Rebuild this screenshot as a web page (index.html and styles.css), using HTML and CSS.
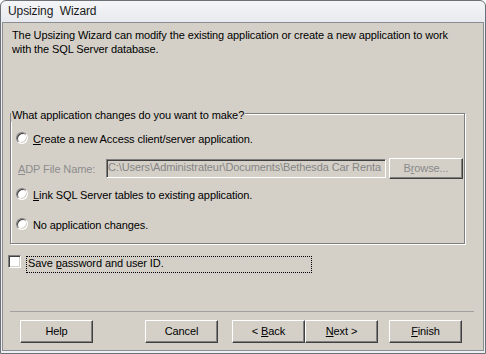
FILE: index.html
```html
<!DOCTYPE html>
<html lang="en">
<head>
  <meta charset="UTF-8" />
  <title>Upsizing Wizard</title>
  <link rel="stylesheet" href="styles.css">
</head>
<body>
  <div class="window">
    <div class="titlebar">Upsizing  Wizard</div>

    <div class="client">
      <p class="intro">The Upsizing Wizard can modify the existing application or create a new application to work<br>with the SQL Server database.</p>

      <fieldset class="group">
        <legend>What application changes do you want to make?</legend>

        <label class="option">
          <span class="radio"></span>
          <span class="option-text"><u>C</u>reate a new Access client/server application.</span>
        </label>

        <div class="file-row">
          <span class="file-label"><u>A</u>DP File Name:</span>
          <div class="textbox">C:\Users\Administrateur\Documents\Bethesda Car Renta</div>
          <button class="btn browse" disabled>B<u>r</u>owse...</button>
        </div>

        <label class="option option-link">
          <span class="radio"></span>
          <span class="option-text"><u>L</u>ink SQL Server tables to existing application.</span>
        </label>

        <label class="option option-none">
          <span class="radio"></span>
          <span class="option-text">No application chan<u>g</u>es.</span>
        </label>
      </fieldset>

      <div class="check-row">
        <span class="checkbox"></span>
        <span class="check-text">Save <u>p</u>assword and user ID.</span>
      </div>

      <div class="separator"></div>

      <!-- Wizard navigation -->
      <div class="buttons">
        <button class="btn">Help</button>
        <button class="btn cancel">Cancel</button>
        <button class="btn back">&lt; <u>B</u>ack</button>
        <button class="btn"><u>N</u>ext &gt;</button>
        <button class="btn finish"><u>F</u>inish</button>
      </div>
    </div>
  </div>
</body>
</html>
```

FILE: styles.css
```css
* {
  box-sizing: border-box;
}
body {
  margin: 0;
  background: #fff;
  font-family: "Liberation Sans", Arial, sans-serif;
  font-size: 11px;
  letter-spacing: -0.1px;
  color: #000;
}
.window {
  width: 486px;
  height: 354px;
  border: 1px solid #6c7178;
  border-radius: 6px 6px 0 0;
  background: linear-gradient(#f4f5f7, #e7eaee 21px, #eceef1 21px);
  display: flex;
  flex-direction: column;
}
.titlebar {
  height: 21px;
  line-height: 21px;
  padding-left: 7px;
  font-size: 12px;
  color: #1a1a1a;
  white-space: pre;
}
.client {
  flex: 1;
  margin: 0 1px 2px;
  border: 1px solid #8a8d92;
  background: #d4d0c8;
  display: flex;
  flex-direction: column;
}
.intro {
  margin: 0;
  padding: 5px 0 0 9px;
  line-height: 14px;
}

/* Group box */
.group {
  margin: 49px 0 0 7px;
  width: 455px;
  min-width: 0;
  padding: 6px 0 9px;
  border: 1px solid #808080;
  box-shadow: 1px 1px 0 #fff, inset 1px 1px 0 #fff;
}
.group legend {
  padding: 4px 1px 0;
  line-height: 13px;
  background: #d4d0c8;
}
.option {
  display: flex;
  align-items: center;
  height: 20px;
  padding-left: 5px;
  gap: 5px;
}
.option-text {
  padding-top: 2px;
  line-height: 13px;
}
.option-link {
  margin-top: 5px;
}
.option-none {
  margin-top: 10px;
}
.radio {
  width: 12px;
  height: 12px;
  border-radius: 50%;
  background: #fff;
  border: 1px solid;
  border-color: #808080 #fff #fff #808080;
  box-shadow: inset 1px 1px 0 #404040, inset -1px -1px 0 #d4d0c8;
}
.file-row {
  display: flex;
  align-items: center;
  height: 21px;
  margin-top: 10px;
  padding-left: 7px;
}
.file-label {
  width: 88px;
  color: #8d8d8d;
}
.textbox {
  width: 280px;
  height: 19px;
  padding-left: 1px;
  line-height: 15px;
  color: #858585;
  white-space: nowrap;
  border: 1px solid;
  border-color: #808080 #fff #fff #808080;
  box-shadow: inset 1px 1px 0 #404040, inset -1px -1px 0 #d4d0c8;
}

/* Check box */
.check-row {
  display: flex;
  align-items: flex-start;
  gap: 5px;
  margin: 11px 0 0 5px;
}
.checkbox {
  width: 13px;
  height: 13px;
  background: #fff;
  border: 1px solid;
  border-color: #808080 #fff #fff #808080;
  box-shadow: inset 1px 1px 0 #404040, inset -1px -1px 0 #d4d0c8;
}
.check-text {
  margin-top: 1px;
  width: 286px;
  padding: 0 0 2px 1px;
  line-height: 13px;
  border: 1px dotted #000;
}

.separator {
  margin: 38px 0 0 7px;
  width: 464px;
  height: 1px;
  background: #a0a0a0;
}

/* Buttons */
.buttons {
  display: flex;
  margin: 8px 0 0 17px;
}
.btn {
  width: 73px;
  height: 23px;
  padding: 0;
  font: inherit;
  letter-spacing: inherit;
  line-height: 13px;
  color: #000;
  background: #d4d0c8;
  border: 1px solid;
  border-color: #fff #404040 #404040 #fff;
  box-shadow: inset -1px -1px 0 #808080;
}
.btn:disabled {
  color: #8a8a8a;
}
.browse {
  width: 74px;
  height: 21px;
  margin-left: 3px;
}
.cancel {
  margin-left: 52px;
}
.back {
  margin-left: 14px;
}
.finish {
  margin-left: 11px;
}
```
